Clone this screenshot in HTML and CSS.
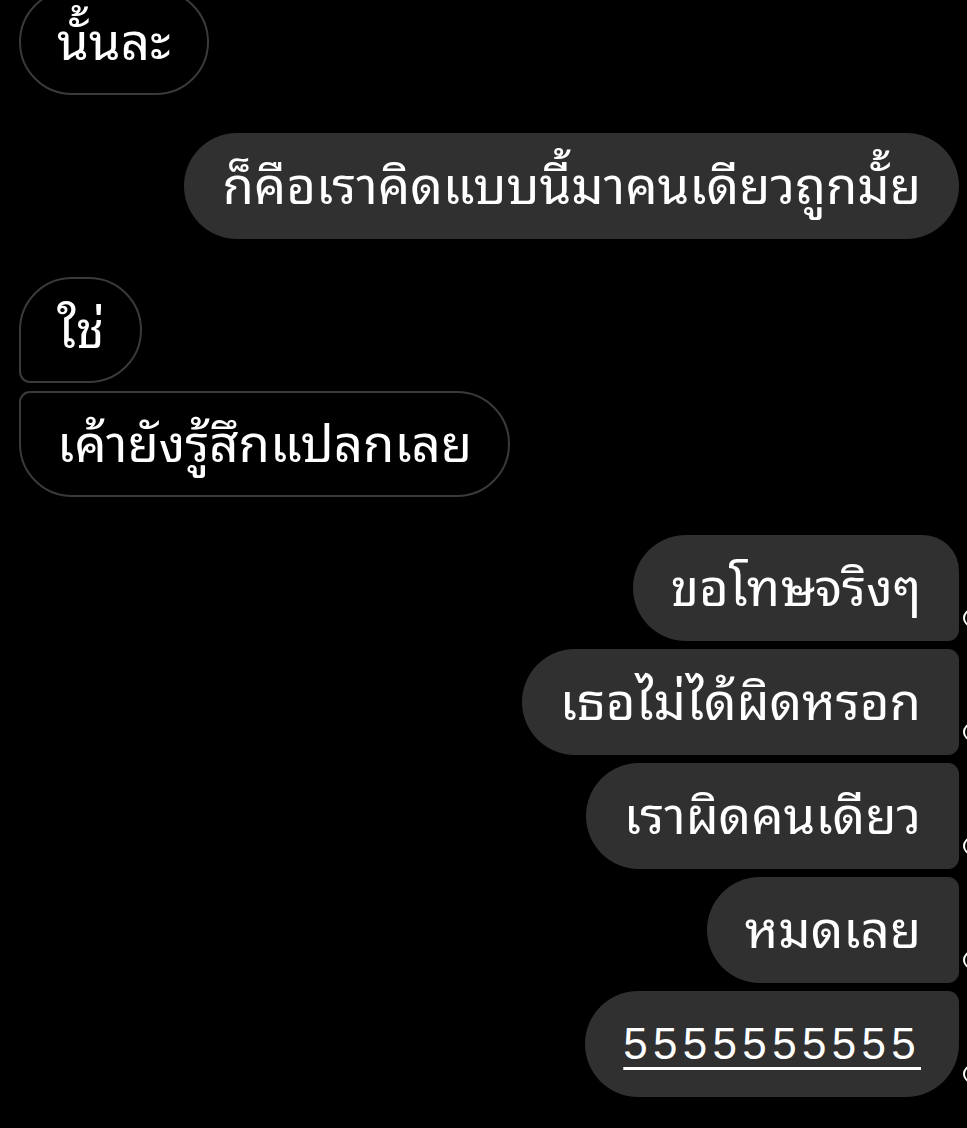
FILE: index.html
```html
<!DOCTYPE html>
<html lang="th">
<head>
<meta charset="utf-8">
<title>Chat</title>
<link rel="stylesheet" href="styles.css">
</head>
<body>
<div class="chat">
  <div class="row them">
    <div class="bubble outline">นั้นละ</div>
  </div>
  <div class="row me group-gap">
    <div class="bubble fill">ก็คือเราคิดแบบนี้มาคนเดียวถูกมั้ย</div>
  </div>
  <div class="row them group-gap">
    <div class="bubble outline first">ใช่</div>
  </div>
  <div class="row them">
    <div class="bubble outline last">เค้ายังรู้สึกแปลกเลย</div>
  </div>
  <div class="row me group-gap">
    <div class="bubble fill first">ขอโทษจริงๆ</div>
    <span class="seen"></span>
  </div>
  <div class="row me">
    <div class="bubble fill mid">เธอไม่ได้ผิดหรอก</div>
    <span class="seen"></span>
  </div>
  <div class="row me">
    <div class="bubble fill mid">เราผิดคนเดียว</div>
    <span class="seen"></span>
  </div>
  <div class="row me">
    <div class="bubble fill mid">หมดเลย</div>
    <span class="seen"></span>
  </div>
  <div class="row me">
    <div class="bubble fill last"><span class="digits">5555555555</span></div>
    <span class="seen"></span>
  </div>
</div>
</body>
</html>
```
FILE: styles.css
```css
html, body {
  margin: 0;
  padding: 0;
  background: #000;
  overflow: hidden;
}

body {
  width: 967px;
  height: 1128px;
  color: #fff;
  font-family: "Liberation Sans", "Noto Sans Thai Looped", "Loma", "Garuda", "Tlwg Typo", "Sarabun", "Noto Sans Thai", "Noto Sans", sans-serif;
  font-size: 51px;
}

.chat {
  display: flex;
  flex-direction: column;
  gap: 8px;
  padding: 0 8px 0 19px;
  margin-top: -11px;
}

.row {
  display: flex;
}

.row.group-gap {
  margin-top: 30px;
}

.row.them {
  justify-content: flex-start;
}

.row.me {
  justify-content: flex-end;
}

.row.me:has(.seen) {
  margin-right: -26px;
}

.bubble {
  box-sizing: border-box;
  height: 106px;
  display: flex;
  align-items: center;
  padding: 0 38px;
  border-radius: 53px;
  white-space: nowrap;
  line-height: 1;
}

.bubble.outline {
  border: 2px solid #3a3a3a;
  padding: 0 36px;
}

.bubble.fill {
  background: #303030;
}

.row.them .bubble.first {
  border-bottom-left-radius: 11px;
}

.row.them .bubble.last {
  border-top-left-radius: 11px;
}

.row.me .bubble.first {
  border-top-right-radius: 36px;
  border-bottom-right-radius: 11px;
}

.row.me .bubble.mid {
  border-top-right-radius: 11px;
  border-bottom-right-radius: 11px;
}

.row.me .bubble.last {
  border-top-right-radius: 11px;
}

.digits {
  text-decoration: underline;
  text-decoration-thickness: 3px;
  text-underline-offset: 8px;
  letter-spacing: 5.3px;
  font-size: 44px;
}

.seen {
  flex-shrink: 0;
  box-sizing: border-box;
  width: 18px;
  height: 18px;
  margin-left: 4px;
  margin-right: 4px;
  align-self: flex-end;
  margin-bottom: 14px;
  border: 2.5px solid #fff;
  border-radius: 50%;
}
```
